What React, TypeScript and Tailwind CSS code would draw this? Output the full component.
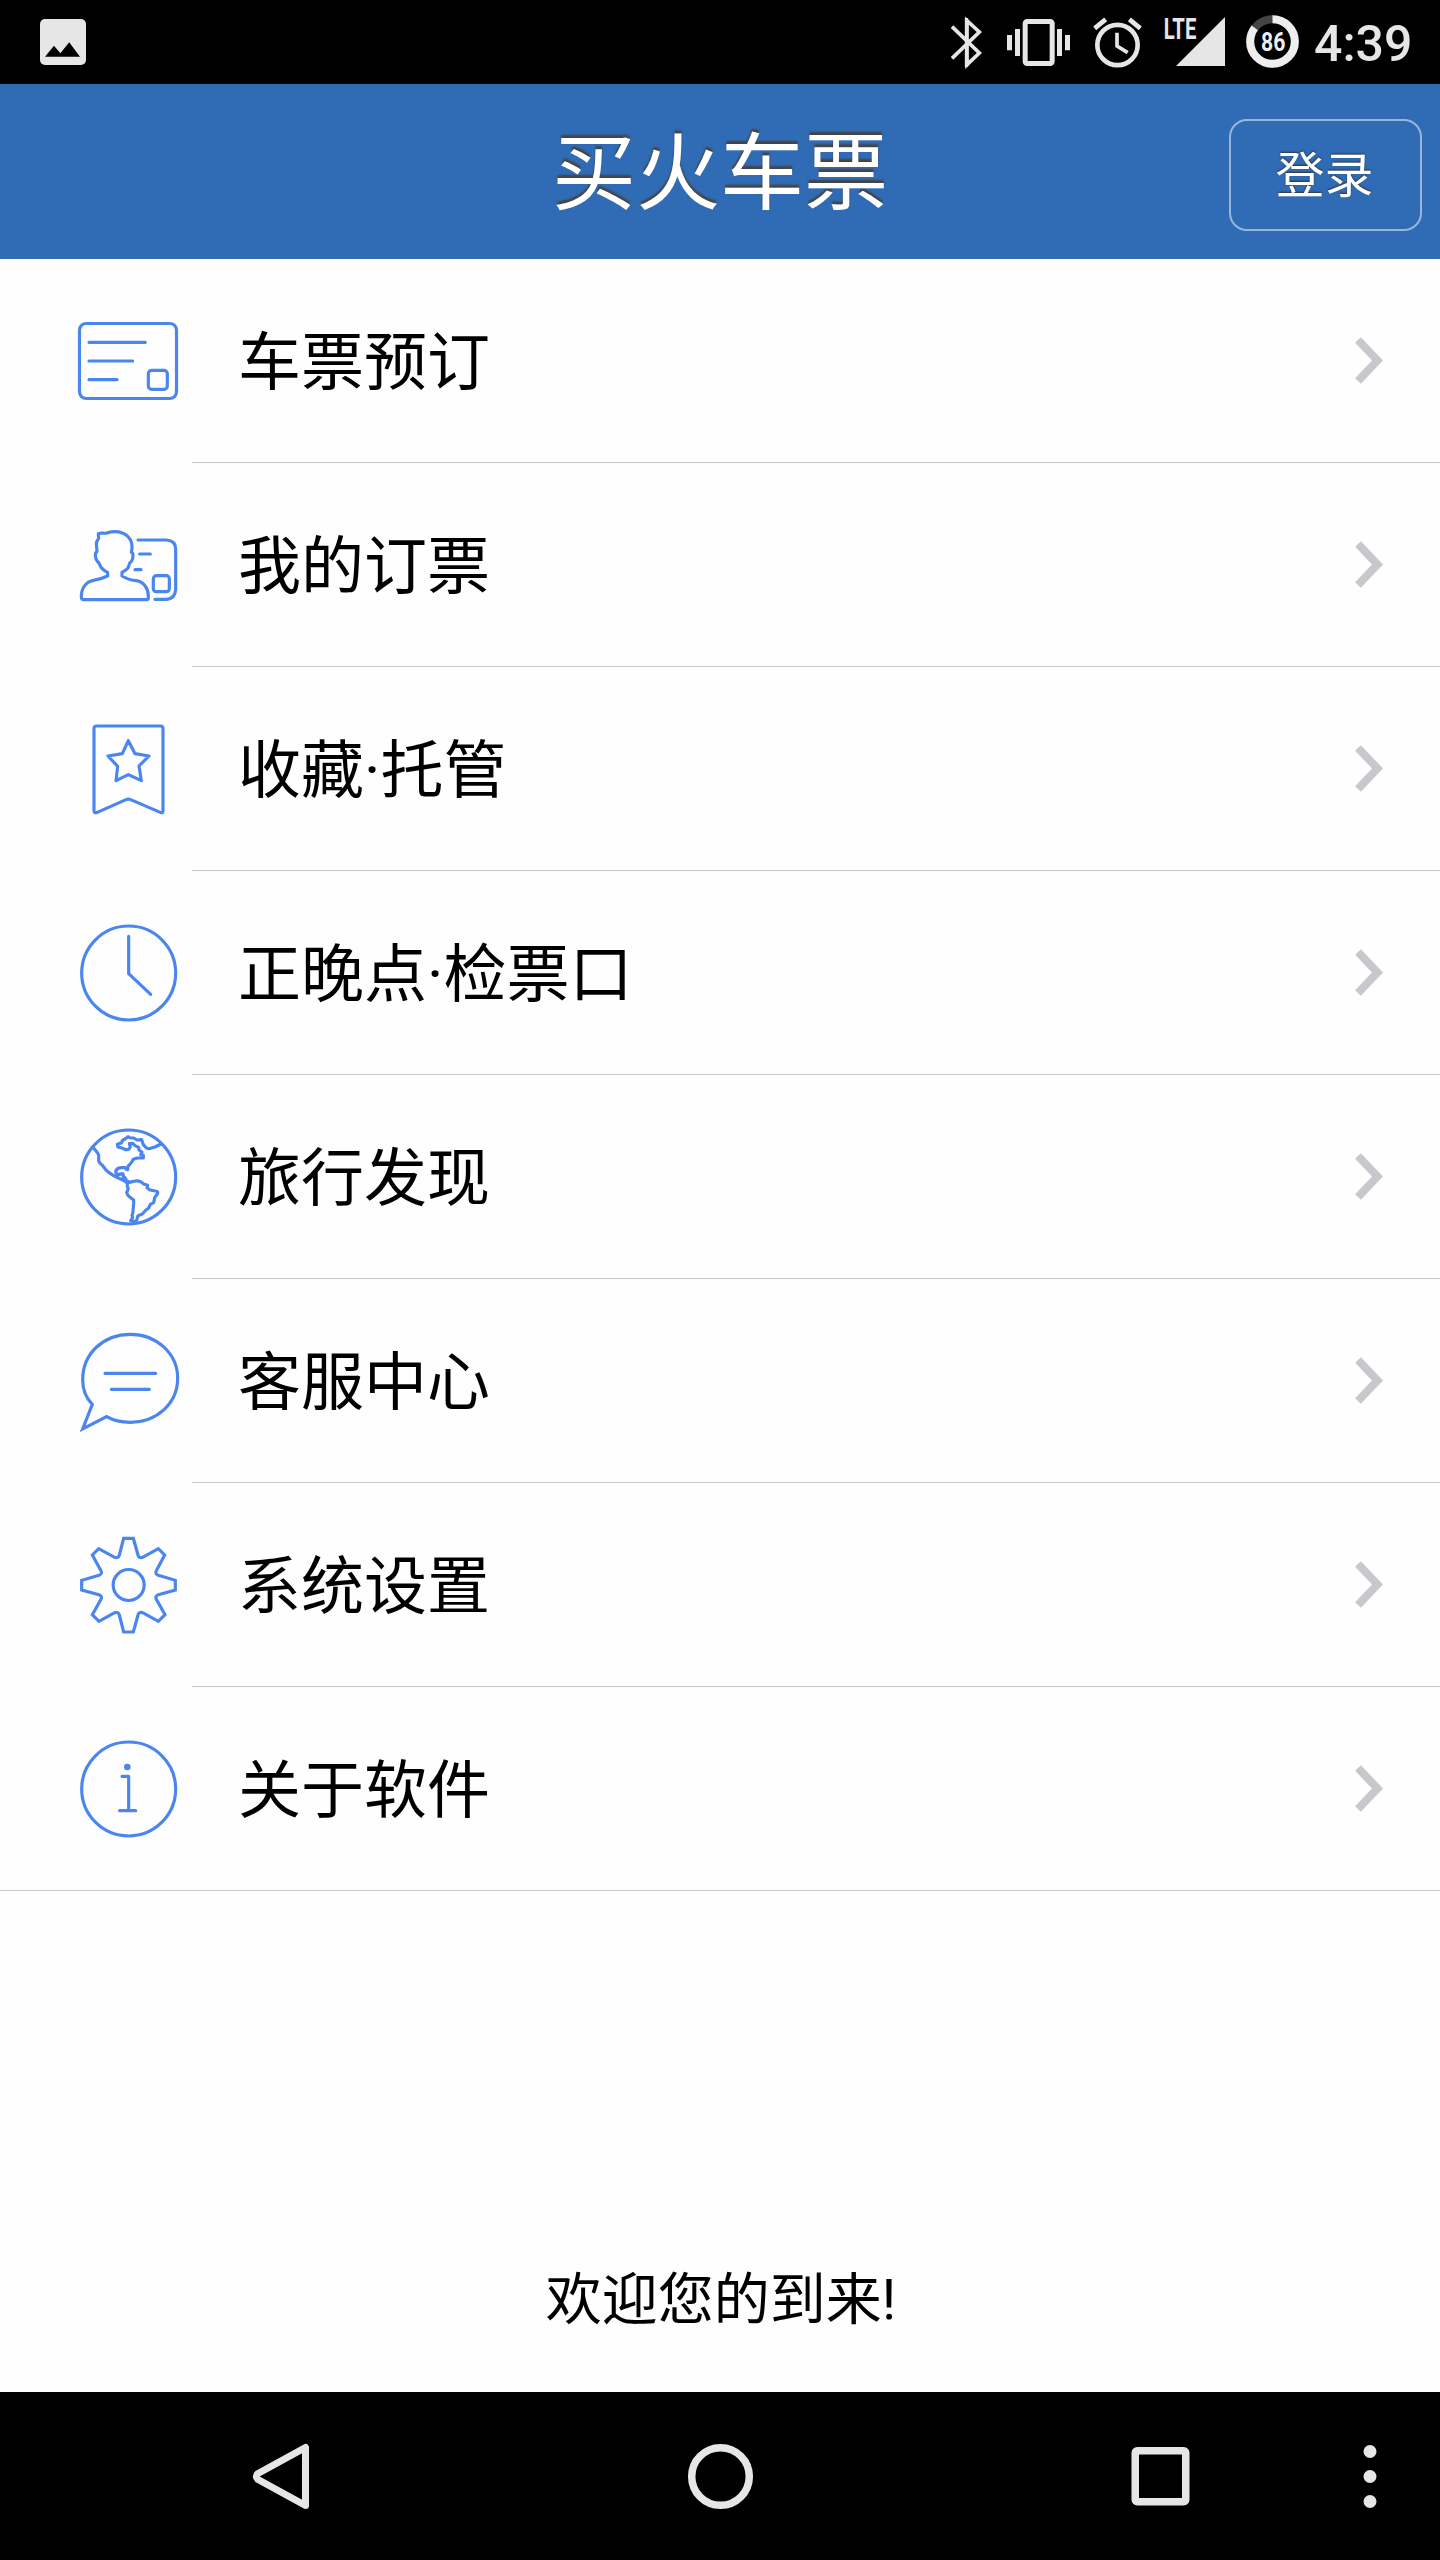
import React from "react";

type MenuItem = {
  key: string;
  name: string;
  viewBox: string;
  icon: React.ReactNode;
};

const menuItems: MenuItem[] = [
  {
    key: "booking",
    name: "车票预订",
    viewBox: "0 3 396 360",
    icon: (
      <>
        <rect x="58.5" y="70.5" width="291" height="225" rx="20" />
        <path d="M87 127H256M87 183H218M87 239H171" />
        <rect x="265" y="211" width="57" height="57" rx="10" />
      </>
    ),
  },
  {
    key: "orders",
    name: "我的订票",
    viewBox: "0 -15 396 360",
    icon: (
      <>
        <path d="M72 269Q64 269 64 261C64 236 76 216 100 211C116 209 130 204 143 198V187C132 182 126 178 121 168C118 162 118 158 112 154C107 147 105 137 107 128L111 125L109 100C109 92 114 92 116 84Q115 77 115 71C125 66 135 73 142 68C170 61 190 66 204 80C217 93 218 111 214 127L218 130C220 140 218 152 210 158C206 164 207 170 203 175C197 182 191 184 186 187V198C200 206 213 211 229 212C252 216 265 235 265 258V263Q265 269 259 269Z" />
        <path d="M234 90H320Q347 92 347 118V239Q345 266 320 268H285M239 132H271M225 179H243" />
        <rect x="280" y="197" width="48" height="48" rx="9" />
      </>
    ),
  },
  {
    key: "favorites",
    name: "收藏·托管",
    viewBox: "0 -3 396 360",
    icon: (
      <>
        <path d="M110 48H301Q309 48 309 56V302Q309 311 301 307L212 269Q205 266 198 269L112 307Q102 311 102 302V56Q102 48 110 48Z" />
        <path d="M205 92L225 131L267 138L237 168L244 212L205 194L168 212L173 169L144 138L187 131Z" />
      </>
    ),
  },
  {
    key: "punctuality",
    name: "正晚点·检票口",
    viewBox: "0 9 396 360",
    icon: (
      <>
        <circle cx="206" cy="189" r="141" />
        <path d="M206 79V191L272 253" />
      </>
    ),
  },
  {
    key: "discover",
    name: "旅行发现",
    viewBox: "0 6 396 360",
    icon: (
      <>
        <circle cx="206" cy="186" r="141" />
        <path d="M99 97L113 114Q118 120 116 130Q114 140 122 146C132 154 133 162 141 168C158 182 176 190 188 195C199 200 204 204 202 211Q201 216 205 221L200 233Q202 241 209 246L221 255C222 268 219 279 219 291L216 301L218 308L212 317L224 319L230 316L234 302L247 297L258 285L266 279L271 268L281 263L284 248L293 235Q294 228 286 228L270 225L261 218L263 211L251 207L242 200Q232 196 221 199L208 202L199 196L195 188L190 188V180L188 176L175 179Q165 175 168 166Q174 158 185 158L195 158L199 163L203 164L204 154L213 144L220 133L232 129H250V121L242 119L246 111L237 105L236 97L225 92L218 85L208 86L211 96L206 103L198 104L188 100L174 96L172 88L185 83L187 76L195 72L204 65L211 69L221 69L231 75L245 74L250 89L259 99L267 101L285 96L303 87" />
      </>
    ),
  },
  {
    key: "support",
    name: "客服中心",
    viewBox: "0 3 396 360",
    icon: (
      <>
        <path strokeLinejoin="miter" d="M97 253C78 234 68 207 68 179C68 101 130 43 211 43C291 43 353 102 353 175C353 250 291 307 211 307C185 307 159 301 140 290L68 327Z" />
        <path d="M135 160H287M154 208H268" />
      </>
    ),
  },
  {
    key: "settings",
    name: "系统设置",
    viewBox: "0 0 396 360",
    icon: (
      <>
        <path strokeLinejoin="miter" d="M191 40H220L234 90Q237 101 248 97L295 71L314 90L289 137Q284 147 295 151L346 166V195L295 209Q284 213 289 223L315 269L295 289L248 263Q237 259 234 270L220 321H191L178 270Q175 259 164 263L117 289L97 269L123 223Q128 213 117 209L65 195V166L117 151Q128 147 123 137L97 90L116 71L164 97Q175 101 178 90Z" />
        <circle cx="206" cy="180" r="46.5" />
      </>
    ),
  },
  {
    key: "about",
    name: "关于软件",
    viewBox: "0 -3 396 360",
    icon: (
      <>
        <circle cx="206" cy="177" r="141" />
        <circle cx="202" cy="111" r="10" fill="#4a86ee" stroke="none" />
        <path d="M186 139H206V242M179 242H227" />
      </>
    ),
  },
];

const StatusBar = () => (
  <div className="flex h-[84px] items-center bg-black pl-10 text-[#e6e6e6]">
    <svg className="h-[46px] w-[46px]" viewBox="0 0 46 46">
      <rect width="46" height="46" rx="5" fill="currentColor" />
      <path d="M5 37.7L14 26.7L20.4 34.3L29.2 23.3L40 37.7Z" fill="#000" />
    </svg>

    {/* bluetooth */}
    <svg className="ml-auto h-[84px] w-[33px]" viewBox="90 0 99 252" fill="none" stroke="currentColor" strokeWidth="11">
      <path d="M96 80L178 159L141 194V62L178 96L96 175" />
      <path d="M139.500 54V201" strokeWidth="10" />
    </svg>

    {/* vibrate */}
    <svg className="ml-[23px] h-[84px] w-[65px]" viewBox="258 0 195 252" fill="currentColor">
      <rect x="315.5" y="64.5" width="81" height="126" rx="6" fill="none" stroke="currentColor" strokeWidth="15" />
      <path d="M261 105h15v46h-15zM285 87h15v81h-15zM411 87h15v81h-15zM435 105h15v46h-15z" />
    </svg>

    {/* alarm */}
    <svg className="ml-[21px] h-[84px] w-[51px]" viewBox="516 0 153 252" fill="none" stroke="currentColor">
      <circle cx="592.5" cy="135" r="60.5" strokeWidth="14" />
      <path d="M591 98V138L623 158" strokeWidth="11" />
      <path d="M524 85L557 58M628 58L661 85" strokeWidth="14" />
    </svg>

    {/* network */}
    <svg className="ml-[21px] h-[84px] w-[62px]" viewBox="732 0 186 252" fill="currentColor">
      <path d="M768 198L915 51V198Z" />
      <text x="731" y="117" fontSize="88" fontWeight="700" fontFamily="Roboto, sans-serif" textLength="98" lengthAdjust="spacingAndGlyphs">
        LTE
      </text>
    </svg>

    {/* battery */}
    <svg className="ml-[20px] h-[84px] w-[53px]" viewBox="978 0 159 252" fill="none" strokeWidth="24">
      <circle cx="1057.5" cy="124.5" r="67" stroke="#444" />
      <circle cx="1057.5" cy="124.5" r="67" stroke="#eee" pathLength="100" strokeDasharray="85 15" transform="rotate(-90 1057.5 124.5)" />
      <text x="1023" y="153" fontSize="78" fontWeight="700" fontFamily="Roboto, sans-serif" fill="#eee" strokeWidth="0" textLength="73" lengthAdjust="spacingAndGlyphs">
        86
      </text>
    </svg>

    <span className="mr-[30px] ml-[15px] w-[96px] whitespace-nowrap pt-[3px] font-[Roboto,sans-serif] text-[50px] leading-none font-medium">
      4:39
    </span>
  </div>
);

const Header = () => (
  <header className="grid h-[175px] grid-cols-[1fr_auto_1fr] items-center bg-[#306cb5] text-white">
    <h1 className="col-start-2 pt-[7px] text-[84px] leading-none [text-shadow:0_-3px_2px_#444]">
      买火车票
    </h1>
    <button className="mt-[7px] mr-[18px] h-28 w-[193px] justify-self-end rounded-[18px] border-2 border-white/50 pt-[3px] pr-[2px] text-[49px] leading-none [text-shadow:0_-1px_2px_#333]">
      登录
    </button>
  </header>
);

const MenuRow = ({ item, last }: { item: MenuItem; last: boolean }) => (
  <li className={`flex h-[204px] ${last ? "border-b border-[#c8c7cc]" : ""}`}>
    <div className="flex w-48 justify-end pt-[42px]">
      <svg
        className="h-[120px] w-[132px]"
        viewBox={item.viewBox}
        fill="none"
        stroke="#4a86ee"
        strokeWidth="9.5"
        strokeLinecap="round"
        strokeLinejoin="round"
      >
        {item.icon}
      </svg>
    </div>
    <div className={`flex flex-1 items-center justify-between pr-[57px] pl-[46px] ${last ? "" : "border-b border-[#c8c7cc]"}`}>
      <span className="pt-1 text-[63px] leading-none">{item.name}</span>
      <svg className="h-12 w-7" viewBox="0 0 28 48" fill="none" stroke="#c8c7cc" strokeWidth="8">
        <path d="M3 3L22.500 23.500L3 44" />
      </svg>
    </div>
  </li>
);

const NavBar = () => (
  <nav className="flex h-[168px] items-center bg-black pl-[248px] text-[#e6e6e6]">
    <svg className="h-[68px] w-16" viewBox="0 0 64 68" fill="none" stroke="currentColor" strokeWidth="7" strokeLinejoin="round">
      <path d="M57.5 5.5V63.5L10 37.5Q6.500 34.500 10 31.500Z" />
    </svg>
    <svg className="ml-[376px] h-[68px] w-16 overflow-visible" viewBox="0 0 64 68" fill="none" stroke="currentColor" strokeWidth="7.5">
      <circle cx="32.500" cy="34.500" r="28.800" />
    </svg>
    <svg className="ml-[376px] h-[68px] w-16" viewBox="0 0 64 68" fill="none" stroke="currentColor" strokeWidth="7.5">
      <rect x="7.250" y="8.750" width="50.500" height="51" rx="2" />
    </svg>
    <svg className="ml-[146px] h-[68px] w-16" viewBox="0 0 64 68" fill="currentColor">
      <circle cx="32" cy="9.500" r="6.500" />
      <circle cx="32" cy="34.500" r="6.500" />
      <circle cx="32" cy="59.500" r="6.500" />
    </svg>
  </nav>
);

const App = () => {
  return (
    <div className="flex h-[2560px] w-[1440px] flex-col bg-[#fefefe] font-[Roboto,'Noto_Sans_CJK_SC',sans-serif] text-black">
      <StatusBar />
      <Header />
      <ul>
        {menuItems.map((item, i) => (
          <MenuRow key={item.key} item={item} last={i === menuItems.length - 1} />
        ))}
      </ul>
      <p className="mt-auto mb-16 pl-[2px] text-center text-[56px] leading-none">
        欢迎您的到来!
      </p>
      <NavBar />
    </div>
  );
};

export default App;
